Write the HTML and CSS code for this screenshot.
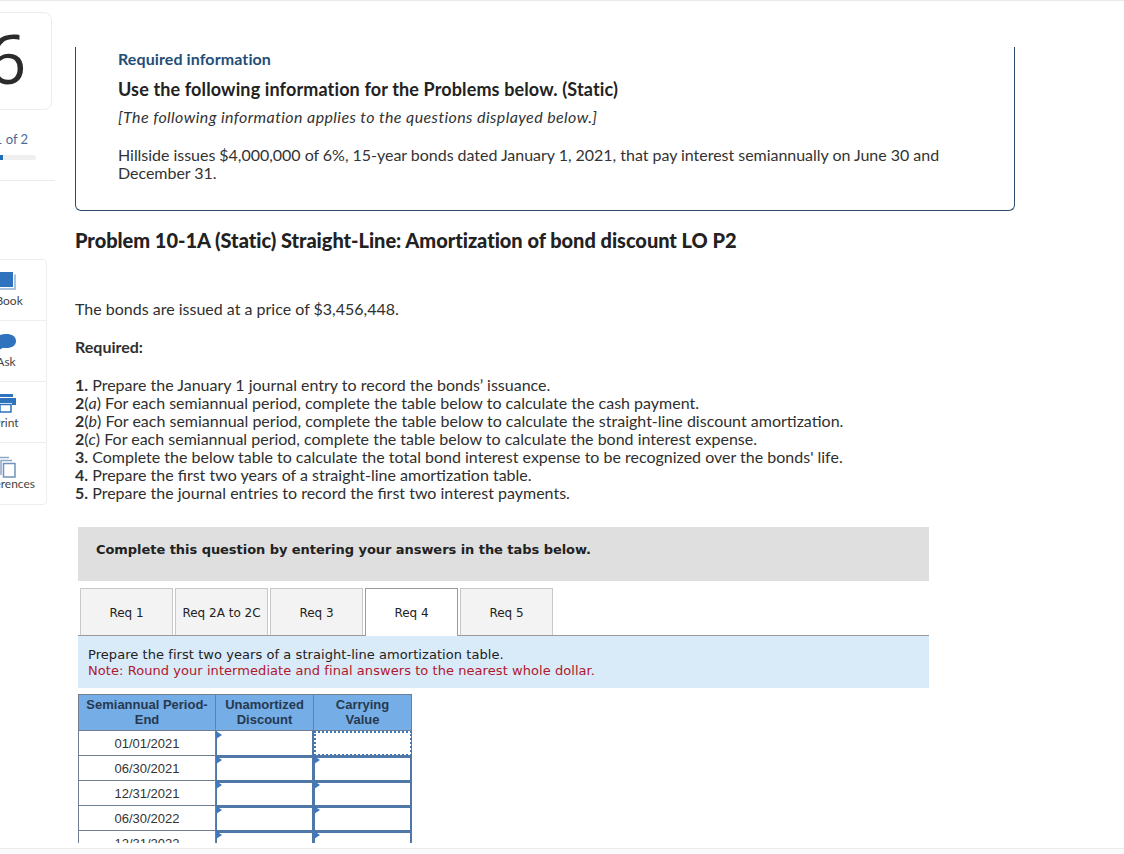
FILE: index.html
```html
<!DOCTYPE html>
<html lang="en">
<head>
<meta charset="utf-8">
<title>Problem 10-1A</title>
<link rel="stylesheet" href="styles.css">
</head>
<body>
<div class="page">
  <aside class="sidebar">
    <div class="num-card"><span class="num">6</span></div>
    <div class="part">Part 1 of 2</div>
    <div class="progress"><div class="progress-fill"></div></div>
    <div class="side-rule"></div>
    <nav class="tools">
      <div class="tool">
        <svg class="tool-icon" width="28" height="24" viewBox="0 0 28 24"><path class="page-line" d="M23 3.500V18H4"/><path class="blue" d="M1 1h20v15H1z"/></svg>
        <span>eBook</span>
      </div>
      <div class="tool">
        <svg class="tool-icon" width="28" height="24" viewBox="0 0 28 24"><path class="blue" d="M14 2c6 0 10 2.500 10 7s-4 7-10 7c-1 0-2 0-3-.3L4 20l2-5.500C3.500 13 2 11.300 2 9c0-4.500 6-7 12-7z"/></svg>
        <span>Ask</span>
      </div>
      <div class="tool">
        <svg class="tool-icon" width="28" height="24" viewBox="0 0 28 24"><path class="blue" d="M8 1h13v3H8zM3 5h21v7h-4v-2H7v2H3z"/><path class="paper" d="M8 11.500h11V19H8z"/></svg>
        <span>Print</span>
      </div>
      <div class="tool">
        <svg class="tool-icon" width="28" height="24" viewBox="0 0 28 24"><path class="sheet" d="M6 19V3.500h11"/><path class="sheet" d="M9 21V6.500h11"/><path class="sheet-front" d="M11.500 9.500h11.500V23H11.500z"/></svg>
        <span>References</span>
      </div>
    </nav>
  </aside>
  <main class="main">
    <section class="info">
      <h2 class="info-kicker">Required information</h2>
      <h3 class="info-title">Use the following information for the Problems below. (Static)</h3>
      <p class="info-note">[The following information applies to the questions displayed below.]</p>
      <p class="info-body">Hillside issues $4,000,000 of 6%, 15-year bonds dated January 1, 2021, that pay interest semiannually on June 30 and December 31.</p>
    </section>
    <h1 class="problem">Problem 10-1A (Static) Straight-Line: Amortization of bond discount LO P2</h1>
    <p class="price">The bonds are issued at a price of $3,456,448.</p>
    <p class="required">Required:</p>
    <ol class="steps">
      <li><b>1.</b> Prepare the January 1 journal entry to record the bonds’ issuance.</li>
      <li><b>2</b>(<i>a</i>) For each semiannual period, complete the table below to calculate the cash payment.</li>
      <li><b>2</b>(<i>b</i>) For each semiannual period, complete the table below to calculate the straight-line discount amortization.</li>
      <li><b>2</b>(<i>c</i>) For each semiannual period, complete the table below to calculate the bond interest expense.</li>
      <li><b>3.</b> Complete the below table to calculate the total bond interest expense to be recognized over the bonds' life.</li>
      <li><b>4.</b> Prepare the first two years of a straight-line amortization table.</li>
      <li><b>5.</b> Prepare the journal entries to record the first two interest payments.</li>
    </ol>
    <div class="banner">Complete this question by entering your answers in the tabs below.</div>
    <div class="tabs">
      <div class="tab">Req 1</div>
      <div class="tab">Req 2A to 2C</div>
      <div class="tab">Req 3</div>
      <div class="tab tab-active">Req 4</div>
      <div class="tab">Req 5</div>
    </div>
    <div class="prompt">
      <div>Prepare the first two years of a straight-line amortization table.</div>
      <div class="prompt-note">Note: Round your intermediate and final answers to the nearest whole dollar.</div>
    </div>
    <table class="amort">
      <thead>
        <tr><th class="c1">Semiannual Period-<br>End</th><th class="c2">Unamortized<br>Discount</th><th class="c3">Carrying<br>Value</th></tr>
      </thead>
      <tbody>
        <tr><td class="date">01/01/2021</td><td class="input"></td><td class="focus"></td></tr>
        <tr><td class="date">06/30/2021</td><td class="input"></td><td class="input"></td></tr>
        <tr><td class="date">12/31/2021</td><td class="input"></td><td class="input"></td></tr>
        <tr><td class="date">06/30/2022</td><td class="input"></td><td class="input"></td></tr>
        <tr><td class="date">12/31/2022</td><td class="input"></td><td class="input"></td></tr>
      </tbody>
    </table>
  </main>
</div>
<div class="footer"></div>
</body>
</html>
```
FILE: styles.css
```css
* { box-sizing: border-box; }
html, body { margin: 0; padding: 0; height: 100%; overflow: hidden; background: #fff; }
body { font-family: Lato, "Liberation Sans", sans-serif; color: #2f2f2f; font-size: 16px; border-top: 1px solid #e9e9e9; display: flex; flex-direction: column; }
.page { display: flex; height: 842px; overflow: hidden; }
.sidebar { width: 161px; margin-left: -86px; flex: none; padding-left: 38px; padding-top: 11px; }
.num-card { width: 100px; height: 98px; border: 1px solid #ececec; border-radius: 8px; padding: 0 0 6px 10px; display: flex; align-items: center; justify-content: center; }
.num { font-family: "Open Sans", sans-serif; font-size: 68px; line-height: 1; color: #2b2b2b; }
.part { margin-top: 21px; padding-left: 16px; font-size: 13px; line-height: 16px; color: #4d6a9c; white-space: nowrap; }
.progress { margin: 8px 0 0 30px; width: 54px; height: 5px; border-radius: 3px; background: #efefef; overflow: hidden; }
.progress-fill { width: 21px; height: 5px; background: #1f6fb5; }
.side-rule { margin-top: 20px; width: 103px; height: 1px; background: #eaeaea; }
.tools { margin: 78px 0 0 13px; width: 82px; border: 1px solid #eeeeee; border-radius: 4px; }
.tool { height: 61px; padding-top: 11px; border-bottom: 1px solid #eeeeee; display: flex; flex-direction: column; align-items: center; font-size: 12px; line-height: 14px; color: #444; white-space: nowrap; }
.tool:last-child { border-bottom: 0; }
.tool-icon { display: block; flex: none; margin-bottom: -1px; }
.blue { fill: #2f72bd; }
.page-line { fill: none; stroke: #8fb0d4; stroke-width: 1.500; }
.paper { fill: #fff; stroke: #2f72bd; stroke-width: 1.500; }
.sheet { fill: none; stroke: #8aa7c6; stroke-width: 1.500; }
.sheet-front { fill: #fff; stroke: #6f94bb; stroke-width: 1.500; }
.main { width: 940px; flex: none; padding-top: 46px; }
.info { height: 164px; border: 1px solid #2c4a6b; border-top: 0; border-radius: 0 0 6px 6px; padding: 3px 42px 0; }
.info-kicker { margin: 0; font-size: 16px; letter-spacing: .1px; line-height: 18px; font-weight: 700; color: #1f4e79; }
.info-title { margin: 11px 0 0; font-size: 18px; letter-spacing: .13px; line-height: 20px; font-weight: 700; color: #222; }
.info-note { margin: 8px 0 0; font-size: 16px; letter-spacing: .4px; line-height: 20px; font-style: italic; color: #333; }
.info-body { margin: 19px 0 0; font-size: 16px; letter-spacing: -.03px; line-height: 18px; width: 860px; color: #333; }
.problem { margin: 18px 0 0; font-size: 20px; letter-spacing: -.03px; line-height: 23px; font-weight: 900; color: #222; }
.price { margin: 47px 0 0; font-size: 16px; line-height: 19px; }
.required { margin: 19px 0 0; font-size: 16px; line-height: 19px; font-weight: 700; }
.steps { list-style: none; margin: 20px 0 0; padding: 0; font-size: 16px; line-height: 18px; }
.banner { margin: 25px 0 0 3px; width: 851px; height: 54px; background: #dfdfdf; padding: 14px 18px 0; font-family: "DejaVu Sans", sans-serif; font-weight: 700; font-size: 13px; letter-spacing: -.05px; line-height: 17px; color: #222; }
.tabs { display: flex; gap: 2px; margin: 7px 0 0 3px; height: 48px; align-items: flex-end; width: 851px; padding-left: 2px; border-bottom: 1px solid #9a9a9a; }
.tab { width: 93px; height: 47px; padding-top: 2px; border: 1px solid #c8c8c8; border-bottom: 0; background: #f3f3f3; display: flex; align-items: center; justify-content: center; font-family: "DejaVu Sans", sans-serif; font-size: 12px; color: #222; }
.tab-active { background: #fff; border-color: #9a9a9a; height: 48px; padding-top: 0; position: relative; top: 1px; }
.prompt { margin-left: 3px; width: 851px; height: 52px; background: #d9eaf9; padding: 11px 10px 0; font-family: "DejaVu Sans", sans-serif; font-size: 13px; letter-spacing: .06px; line-height: 16px; color: #222; }
.prompt-note { color: #b0182c; }
.amort { margin: 6px 0 0 3px; border-collapse: collapse; table-layout: fixed; width: 333px; font-family: "Liberation Sans", sans-serif; font-size: 13px; }
.amort th { height: 36px; padding: 0 0 2px; background: #75ade6; border: 1px solid #6f7f91; color: #26394f; line-height: 15px; font-size: 13px; }
.c1 { width: 137px; }
.c2 { width: 98px; }
.c3 { width: 98px; }
.amort td { height: 25px; padding: 0; border: 1px solid #6f7f91; }
.date { text-align: center; color: #333; }
.amort .input { position: relative; border-color: #4f77a8; box-shadow: inset 1px 2px 0 #4f77a8, inset -1px 0 0 #4f77a8; }
.amort tbody tr:first-child .input { box-shadow: inset 1px 0 0 #4f77a8, inset -1px 0 0 #4f77a8; }
.amort .input::before { content: ""; position: absolute; left: 0; top: 0; border-left: 6px solid #3f78bd; border-top: 4px solid transparent; border-bottom: 4px solid transparent; }
.amort .focus { outline: 2px dotted #3f78bd; outline-offset: -2px; }
.footer { flex: 1; margin-top: 5px; border-top: 1px solid #ececec; background: #fafafa; }
```
